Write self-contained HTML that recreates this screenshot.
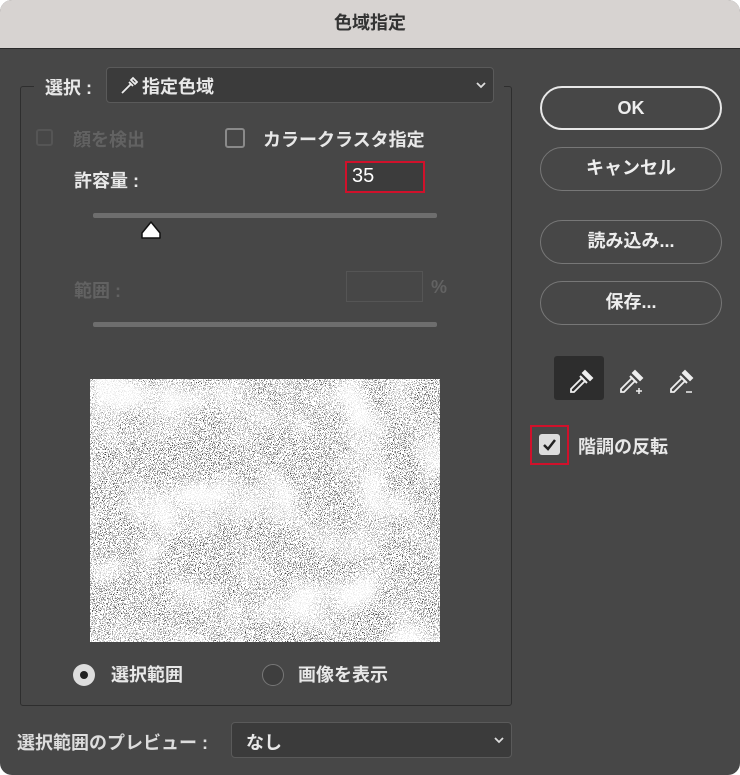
<!DOCTYPE html>
<html><head><meta charset="utf-8"><style>
body{margin:0;width:740px;height:775px;background:#fff;font-family:"Liberation Sans","Noto Sans CJK JP",sans-serif;overflow:hidden}
.win{position:absolute;left:0;top:0;width:740px;height:775px;background:#474747;border-radius:12px;overflow:hidden}
.title{position:absolute;left:0;top:0;width:740px;height:48px;background:#d7d3d1;border-bottom:1px solid #2a2a2a;text-align:center;line-height:46px;font-size:18px;font-weight:bold;color:#333}
.t{position:absolute;color:#e8e8e8;font-size:18px;font-weight:bold;white-space:nowrap}
.dim{color:#626262}
.fs{position:absolute;left:20px;top:86px;width:490px;height:618px;border:1px solid #2e2e2e;border-radius:3px}
.dd{position:absolute;background:#3b3b3b;border:1px solid #5a5a5a;border-radius:4px}
.cb{position:absolute;width:17px;height:17px;border:2px solid #8a8a8a;border-radius:3px;box-sizing:border-box}
.btn{position:absolute;left:540px;width:182px;height:44px;border:1.5px solid #777;border-radius:22px;box-sizing:border-box;color:#eee;font-size:18px;font-weight:bold;text-align:center;line-height:41px}
.track{position:absolute;left:93px;width:344px;height:5px;background:#6e6e6e;border-radius:2px}
.chev{position:absolute}
</style></head><body><div class="win">
<div class="title">色域指定</div>
<div class="fs"></div>
<div style="position:absolute;left:34px;top:70px;width:470px;height:34px;background:#474747"></div>
<div class="t" style="left:45px;top:74px">選択 :</div>
<div class="dd" style="left:106px;top:67px;width:386px;height:34px"></div>
<svg style="position:absolute;left:120px;top:75px" width="18" height="20" viewBox="0 0 18 20"><path d="M2 18 L11 9 M9 7 L13 11 M11 5 L15 9 L17 7 L13 3Z" stroke="#eee" stroke-width="1.8" fill="none"/></svg>
<div class="t" style="left:142px;top:73px">指定色域</div>
<svg class="chev" style="left:475px;top:81px" width="12" height="8"><path d="M2 2 L6 6 L10 2" stroke="#ddd" stroke-width="1.8" fill="none"/></svg>
<div class="cb" style="left:36px;top:129px;border-color:#555"></div>
<div class="t dim" style="left:73px;top:126px">顔を検出</div>
<div class="cb" style="left:225px;top:128px;width:20px;height:20px"></div>
<div class="t" style="left:263px;top:126px">カラークラスタ指定</div>
<div class="t" style="left:74px;top:167px">許容量 :</div>
<div style="position:absolute;left:345px;top:161px;width:80px;height:32px;border:2px solid #d0112b;box-sizing:border-box;background:#3c3c3c"></div>
<div class="t" style="left:352px;top:165px;font-size:20px;color:#fff;font-weight:normal">35</div>
<div class="track" style="top:213px"></div>
<svg style="position:absolute;left:140px;top:218px" width="22" height="22"><path d="M2 20 L2 15 L11 4 L20 15 L20 20Z" fill="#fff" stroke="#111" stroke-width="1.5" stroke-linejoin="round"/></svg>
<div class="t dim" style="left:74px;top:277px">範囲 :</div>
<div style="position:absolute;left:346px;top:271px;width:77px;height:31px;border:1px solid #555;box-sizing:border-box"></div>
<div class="t dim" style="left:431px;top:277px">%</div>
<div class="track" style="top:322px"></div>
<svg style="position:absolute;left:90px;top:379px" width="350" height="263">
<filter id="lo" x="0" y="0" width="100%" height="100%" color-interpolation-filters="sRGB"><feTurbulence type="fractalNoise" baseFrequency="0.02" numOctaves="2" seed="5"/><feColorMatrix type="matrix" values="0 0 0 0 1 0 0 0 0 1 0 0 0 0 1 3 0 0 0 -1.3"/></filter>
<filter id="hi" x="0" y="0" width="100%" height="100%" color-interpolation-filters="sRGB"><feTurbulence type="fractalNoise" baseFrequency="1.2" numOctaves="1" seed="3"/><feColorMatrix type="matrix" values="0 0 0 0 1 0 0 0 0 1 0 0 0 0 1 -20 0 0 0 12.8"/></filter>
<rect width="350" height="263" fill="#000"/>
<rect width="350" height="263" filter="url(#hi)"/>
<rect width="350" height="263" filter="url(#lo)" opacity="0.85"/>
</svg>
<div style="position:absolute;left:73px;top:664px;width:22px;height:22px;border-radius:50%;background:#ddd"></div>
<div style="position:absolute;left:80px;top:671px;width:8px;height:8px;border-radius:50%;background:#222"></div>
<div class="t" style="left:111px;top:661px">選択範囲</div>
<div style="position:absolute;left:262px;top:664px;width:20px;height:20px;border-radius:50%;border:1.5px solid #777;background:#3e3e3e"></div>
<div class="t" style="left:298px;top:661px">画像を表示</div>
<div class="t" style="left:17px;top:729px;color:#ddd">選択範囲のプレビュー :</div>
<div class="dd" style="left:231px;top:722px;width:279px;height:34px"></div>
<div class="t" style="left:246px;top:729px">なし</div>
<svg class="chev" style="left:493px;top:736px" width="12" height="8"><path d="M2 2 L6 6 L10 2" stroke="#ddd" stroke-width="1.8" fill="none"/></svg>
<div class="btn" style="top:86px;border:2px solid #e8e8e8">OK</div>
<div class="btn" style="top:147px">キャンセル</div>
<div class="btn" style="top:220px">読み込み...</div>
<div class="btn" style="top:281px">保存...</div>
<div style="position:absolute;left:554px;top:356px;width:50px;height:44px;background:#2d2d2d;border-radius:3px"></div>
<svg style="position:absolute;left:566px;top:363px" width="30" height="32" viewBox="0 0 30 32"><path d="M5 26 L16 15 L19 18 L8 29 L5 29Z" fill="none" stroke="#eee" stroke-width="1.8"/><path d="M14 13 L21 20 M17 10 L24 17 L26 15 L19 8Z" stroke="#eee" stroke-width="2" fill="#eee"/></svg>
<svg style="position:absolute;left:616px;top:363px" width="30" height="34" viewBox="0 0 30 34"><path d="M5 26 L16 15 L19 18 L8 29 L5 29Z" fill="none" stroke="#eee" stroke-width="1.8"/><path d="M14 13 L21 20 M17 10 L24 17 L26 15 L19 8Z" stroke="#eee" stroke-width="2" fill="#eee"/><path d="M20 28 h6 M23 25 v6" stroke="#eee" stroke-width="1.5"/></svg>
<svg style="position:absolute;left:666px;top:363px" width="30" height="34" viewBox="0 0 30 34"><path d="M5 26 L16 15 L19 18 L8 29 L5 29Z" fill="none" stroke="#eee" stroke-width="1.8"/><path d="M14 13 L21 20 M17 10 L24 17 L26 15 L19 8Z" stroke="#eee" stroke-width="2" fill="#eee"/><path d="M20 29 h6" stroke="#eee" stroke-width="1.5"/></svg>
<div style="position:absolute;left:530px;top:425px;width:39px;height:40px;border:2px solid #d0112b;box-sizing:border-box"></div>
<div style="position:absolute;left:539px;top:434px;width:21px;height:21px;background:#ddd;border-radius:3px"></div>
<svg style="position:absolute;left:539px;top:434px" width="21" height="21"><path d="M5 11 L9 15 L16 6" stroke="#222" stroke-width="2.5" fill="none"/></svg>
<div class="t" style="left:578px;top:433px">階調の反転</div>
</div></body></html>
